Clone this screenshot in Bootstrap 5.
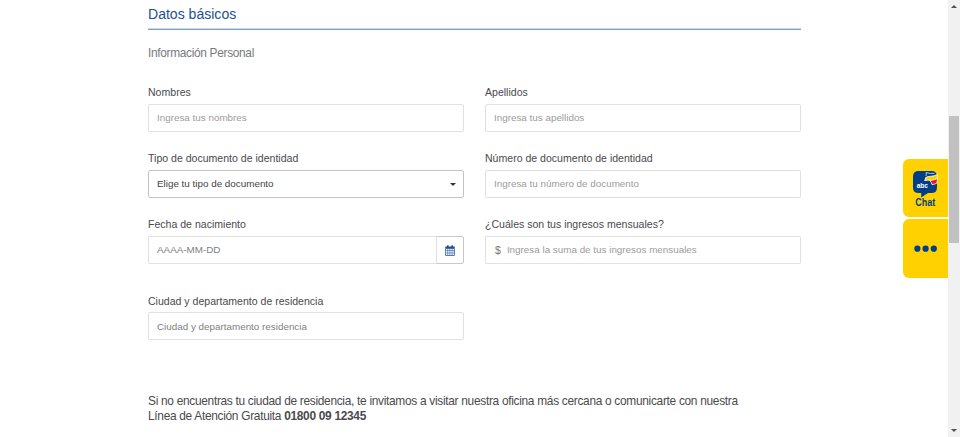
<!DOCTYPE html>
<html lang="es">
<head>
<meta charset="utf-8">
<meta name="viewport" content="width=device-width, initial-scale=1">
<title>Datos básicos</title>
<link href="https://cdn.jsdelivr.net/npm/bootstrap@5.3.0/dist/css/bootstrap.min.css" rel="stylesheet">
<style>
html, body { height: 437px; overflow: hidden; }
body { font-family: "Liberation Sans", Arial, sans-serif; color: #4a4a4d; font-size: 10.55px; line-height: 14px; background: #fff; }
.form-area { width: 653px; margin-left: 148px; }
.section-title { height: 30px; padding-top: 5px; font-size: 14.06px; line-height: 18px; color: #1d4f91; border-bottom: 1px solid #7c9fc6; box-shadow: inset 0 -1px #cddbe9; font-weight: 400; }
.section-sub { font-size: 11.9px; letter-spacing: -.32px; line-height: 16px; color: #77797c; margin-top: 15px; font-weight: 400; }
.field-grid { --bs-gutter-x: 21px; margin-top: 24px; }
.field { height: 66px; }
.field-late { margin-top: 10px; }
.field .form-label { display: block; height: 19px; line-height: 14px; margin: 0; }
.field-late .form-label { padding-top: .5px; }
.field .form-control, .pick, .input-group-text { height: 28px; font-size: 9.85px; line-height: 14px; padding: 0 8px 1px; border: 1px solid #e0e0e0; border-radius: 2px; background: #fff; box-shadow: none; }
.field .form-control::placeholder { color: #9c9c9c; opacity: 1; }
.field .form-control.darker::placeholder { color: #808080; }
.field-late .form-control { padding-bottom: 0; }
.pick { border-color: #c4c4c4; color: #444; padding-bottom: 0; }
.caret { width: 0; height: 0; border: 3px solid transparent; border-top-color: #333; border-bottom: 0; margin-right: -1px; }
.input-group-text.cal { width: 28px; border-color: #c8c8c8; justify-content: center; }
.input-group-text.coin { padding: 0 7px 0 9px; border-right: 0; color: #777; font-size: 10.55px; }
.input-group .form-control.money { padding-left: 0; border-left: 0; }
.help { font-size: 11.9px; letter-spacing: -.295px; line-height: 15.4px; margin-top: 35px; }
.side { position: fixed; left: 903px; top: 159px; width: 45px; gap: 2px; }
.side-btn { height: 58.4px; background: #ffd100; border-radius: 6px 0 0 6px; }
.side-btn svg { display: block; }
.rail { position: fixed; right: 0; top: 0; width: 12px; height: 437px; background: #f1f1f1; }
.thumb { width: 10px; height: 127px; margin-top: 108.4px; background: #c1c1c1; }
.tri { border: 3px solid transparent; width: 0; height: 0; }
.tri-up { border-bottom-color: #505050; border-top: 0; margin-top: 5px; }
.tri-down { border-top-color: #505050; border-bottom: 0; margin-bottom: 5px; }
</style>
<script src="https://cdn.jsdelivr.net/npm/bootstrap@5.3.0/dist/js/bootstrap.bundle.min.js"></script>
</head>
<body>
<main class="form-area">
  <h1 class="section-title mb-0">Datos básicos</h1>
  <h2 class="section-sub mb-0">Información Personal</h2>
  <form class="row field-grid">
    <div class="col-6 field"><label class="form-label" for="nom">Nombres</label><input id="nom" class="form-control" placeholder="Ingresa tus nombres"></div>
    <div class="col-6 field"><label class="form-label" for="ape">Apellidos</label><input id="ape" class="form-control" placeholder="Ingresa tus apellidos"></div>
    <div class="col-6 field"><span class="form-label">Tipo de documento de identidad</span><button type="button" class="pick w-100 d-flex align-items-center justify-content-between"><span>Elige tu tipo de documento</span><span class="caret"></span></button></div>
    <div class="col-6 field"><label class="form-label" for="num">Número de documento de identidad</label><input id="num" class="form-control" placeholder="Ingresa tu número de documento"></div>
    <div class="col-6 field"><label class="form-label" for="fec">Fecha de nacimiento</label>
      <div class="input-group"><input id="fec" class="form-control darker" placeholder="AAAA-MM-DD"><span class="input-group-text cal p-0">
        <svg width="10" height="11" viewBox="0 0 10 11"><path fill="#1d4f91" d="M.3 1.400h9.400v9.300H.3zM2 .2h1.500v2H2zM6.500 .2H8v2H6.500z"/><path fill="#f4f7ff" d="M1 3.800h1.600v1.700H1zM3.100 3.800h1.600v1.700H3.100zM5.200 3.800h1.600v1.700H5.200zM7.300 3.800h1.600v1.700H7.300zM1 6.100h1.600v1.700H1zM3.100 6.100h1.600v1.700H3.100zM5.200 6.100h1.600v1.700H5.200zM7.300 6.100h1.600v1.700H7.300zM1 8.300h1.600v1.700H1zM3.100 8.300h1.600v1.700H3.100zM5.200 8.300h1.600v1.700H5.200zM7.300 8.300h1.600v1.700H7.300z"/></svg></span></div></div>
    <div class="col-6 field"><label class="form-label" for="ing">¿Cuáles son tus ingresos mensuales?</label>
      <div class="input-group"><span class="input-group-text coin">$</span><input id="ing" class="form-control money" placeholder="Ingresa la suma de tus ingresos mensuales"></div></div>
    <div class="col-6 field field-late"><label class="form-label" for="ciu">Ciudad y departamento de residencia</label><input id="ciu" class="form-control darker" placeholder="Ciudad y departamento residencia"></div>
  </form>
  <p class="help mb-0">Si no encuentras tu ciudad de residencia, te invitamos a visitar nuestra oficina más cercana o comunicarte con nuestra<br>Línea de Atención Gratuita <strong>01800 09 12345</strong></p>
</main>
<aside class="side d-flex flex-column">
  <div class="side-btn"><svg width="45" height="58" viewBox="0 0 45 58" font-family="Liberation Sans, Arial, sans-serif" font-weight="700">
    <path fill="#003f87" d="M15.500 12h13q5.500 0 5.500 5.500v11q0 5.500-5.500 5.500h-3.500l-6.800 4.500V34h-2.700Q10 34 10 28.500v-11Q10 12 15.500 12z"/>
    <path fill="none" stroke="#fff" stroke-width=".7" d="M23 17q.6-1.500 0-3.400 4.500 1.300 8.500 .7"/>
    <path fill="#e01a22" stroke="#fff" stroke-width=".8" d="M26.400 21q4.200.2 8.200-1.900l-.7 5q-2.200 1.300-4.900 1.500-.3-2.200-2.600-4.600z"/>
    <path fill="#ffd100" stroke="#fff" stroke-width=".8" d="M21.600 21.600q.9-1.400 1-3 2.500-1.400 5-1.300 3.500 0 6.600-1.700l.3 3.800q-3 1.600-6.300 1.800-3.500-.2-6.600.4z"/>
    <text x="13.700" y="28.600" font-size="6.600" fill="#fff" textLength="11.300">abc</text>
    <text x="12.300" y="46.800" font-size="10" fill="#003f87" textLength="20" lengthAdjust="spacingAndGlyphs">Chat</text></svg></div>
  <div class="side-btn"><svg width="45" height="58" fill="#003f87"><circle cx="14.400" cy="29.700" r="3.100"/><circle cx="22.600" cy="29.700" r="3.100"/><circle cx="30.800" cy="29.700" r="3.100"/></svg></div>
</aside>
<div class="rail d-flex flex-column align-items-center"><span class="tri tri-up"></span><span class="thumb"></span><span class="tri tri-down mt-auto"></span></div>
</body>
</html>
